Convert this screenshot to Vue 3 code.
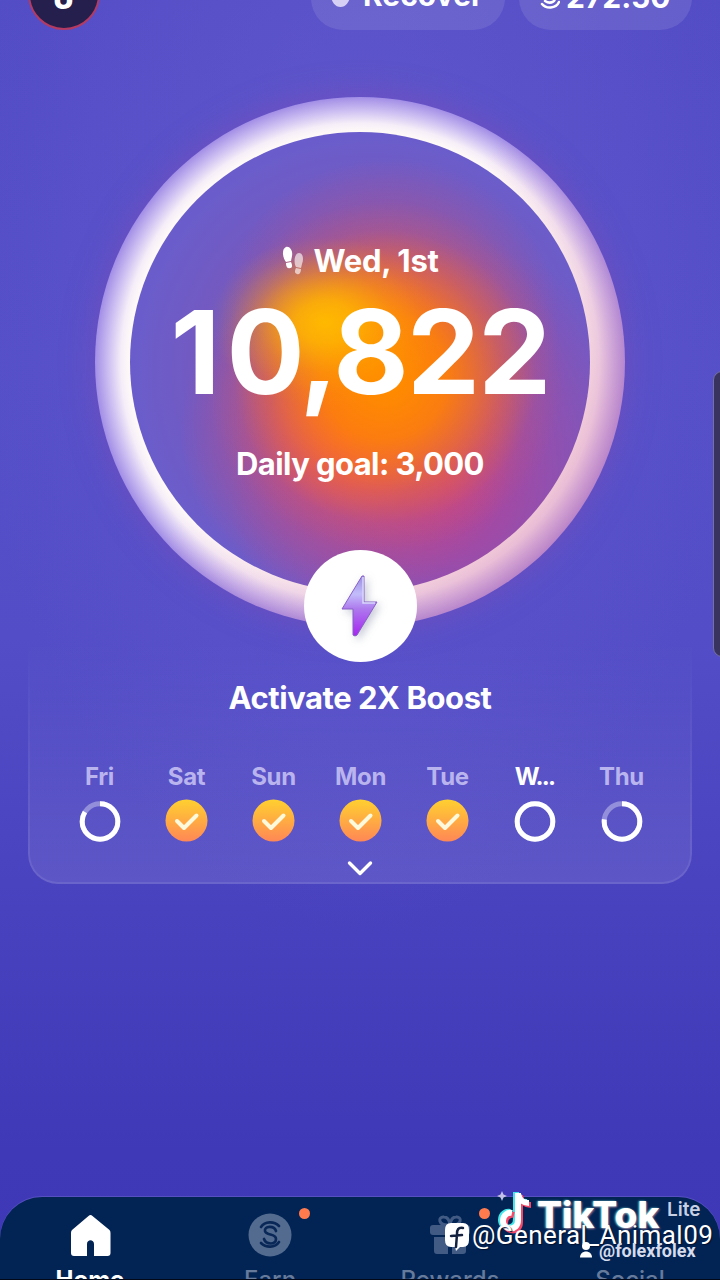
<script setup>
const days = [
    { name: "Fri", progress: 84 },
    { name: "Sat", done: true },
    { name: "Sun", done: true },
    { name: "Mon", done: true },
    { name: "Tue", done: true },
    { name: "W...", progress: 100, today: true },
    { name: "Thu", progress: 77 },
];

const tabs = [
    { name: "Home", icon: "home", active: true },
    { name: "Earn", icon: "coin", dot: true },
    { name: "Rewards", icon: "gift", dot: true },
    { name: "Social", icon: "people" },
];
</script>

<template>
    <main class="screen">
        <header class="top-bar">
            <div class="avatar">J</div>
            <div class="pill recover"><i class="status"></i>Recover</div>
            <div class="pill balance">
                <svg width="20" height="32" viewBox="0 0 20 32">
                    <path
                        d="M16 9C9 3 1 11 7 14l6 2c5 3-2 8-8 4M2 23c4 5 14 5 17-2"
                        fill="none"
                        stroke="#fff"
                        stroke-width="2.5"
                        stroke-linecap="round"
                    />
                </svg>
                <span>272.50</span>
            </div>
        </header>

        <section class="ring">
            <div class="disc">
                <div class="date">
                    <svg width="24" height="30" viewBox="0 0 24 30">
                        <g fill="#fff">
                            <path d="M5 1c4-1 7 4 6 9l-1 5-5 1C2 13 0 3 5 1z" />
                            <path d="M5 17l5-1c2 4 1 6-1 6-3 1-4-2-4-5z" />
                        </g>
                        <g fill="#fff" opacity=".62">
                            <path d="M18 7c4 0 5 6 3 11l-1 4-5-1c-3-6-1-14 3-14z" />
                            <path d="M15 22l5 1c0 4-2 6-4 5-3-1-2-4-1-6z" />
                        </g>
                    </svg>
                    <span>Wed, 1st</span>
                </div>
                <div class="steps"><span>1</span>0,822</div>
                <div class="goal">Daily goal: 3,000</div>
            </div>
            <button class="boost">
                <svg width="48" height="72" viewBox="0 0 48 72">
                    <defs>
                        <linearGradient id="bolt" x1="0" y1="0" x2="0" y2="1">
                            <stop offset="0" stop-color="#9a8ce0" />
                            <stop offset=".3" stop-color="#c3bdfb" />
                            <stop offset=".55" stop-color="#ad79ed" />
                            <stop offset="1" stop-color="#a624f0" />
                        </linearGradient>
                    </defs>
                    <path
                        d="M25 6L5 39h11v26q2 2 4 0L40 32H27V6z"
                        fill="url(#bolt)"
                        stroke="#8660c7"
                        stroke-width="1"
                        stroke-linejoin="round"
                    />
                    <path d="M26 7v26h12" fill="none" stroke="#d9d6fa" stroke-width="1.5" />
                </svg>
            </button>
        </section>

        <section class="card">
            <h2>Activate 2X Boost</h2>
            <div class="week">
                <div
                    class="day"
                    v-for="day in days"
                    :key="day.name"
                    :class="{ today: day.today }"
                >
                    <span>{{ day.name }}</span>
                    <svg width="44" height="44" viewBox="0 0 44 44">
                        <defs>
                            <linearGradient id="sun" x1="0" y1="0" x2="0" y2="1">
                                <stop offset="0" stop-color="#ffd02f" />
                                <stop offset="1" stop-color="#ff8756" />
                            </linearGradient>
                        </defs>
                        <template v-if="day.done">
                            <circle cx="21.5" cy="21.5" r="21" fill="url(#sun)" />
                            <path
                                d="M12 22l7 7L31.500 16.5"
                                fill="none"
                                stroke="#fff9dc"
                                stroke-width="4"
                                stroke-linecap="round"
                                stroke-linejoin="round"
                            />
                        </template>
                        <g v-else fill="none" stroke="#fff" stroke-width="5">
                            <circle cx="22" cy="22.5" r="17.8" opacity=".35" />
                            <circle
                                cx="22"
                                cy="22.5"
                                r="17.8"
                                pathLength="100"
                                :stroke-dasharray="`${day.progress} 100`"
                                transform="rotate(-90 22 22.5)"
                            />
                        </g>
                    </svg>
                </div>
            </div>
            <svg class="chevron" width="28" height="18" viewBox="0 0 28 18">
                <path
                    d="M3.500 4L14 14.500 24.500 4"
                    fill="none"
                    stroke="#fff"
                    stroke-width="3.4"
                    stroke-linecap="round"
                    stroke-linejoin="round"
                />
            </svg>
        </section>

        <nav class="tabs">
            <div
                class="tab"
                v-for="tab in tabs"
                :key="tab.name"
                :class="{ active: tab.active }"
            >
                <div class="tab-icon">
                    <svg v-if="tab.icon == 'home'" width="44" height="44" viewBox="0 0 44 44">
                        <path
                            d="M20.500 3q2-2 4 0l17 14q1 1 1 3v20q0 3-3 3H26V31c0-5-7-5-7 0v12H6q-3 0-3-3V20q0-2 1-3z"
                            fill="#fff"
                        />
                    </svg>
                    <svg v-if="tab.icon == 'coin'" width="44" height="44" viewBox="0 0 44 44">
                        <circle cx="22" cy="22" r="21.500" fill="#536b8f" />
                        <path
                            d="M28 18c-2-6-12-5-11 0s11 2 11 8-10 6-12 0M13 14c4-6 13-6 18-1M13 30c5 5 14 5 18-1"
                            fill="none"
                            stroke="#0a2857"
                            stroke-width="2.700"
                            stroke-linecap="round"
                        />
                    </svg>
                    <svg v-if="tab.icon == 'gift'" width="44" height="44" viewBox="0 0 44 44">
                        <g fill="#415b84">
                            <rect x="2" y="12" width="40" height="10" rx="3" />
                            <path d="M6 24h14v17H9q-3 0-3-3zM24 24h14v14q0 3-3 3H24z" />
                        </g>
                        <path
                            d="M22 12c-13 1-12-9-6-8q5 0 6 8 1-8 6-8c6-1 7 9-6 8z"
                            fill="none"
                            stroke="#415b84"
                            stroke-width="3"
                        />
                    </svg>
                    <i v-if="tab.dot" class="dot"></i>
                </div>
                <span>{{ tab.name }}</span>
            </div>
        </nav>

        <aside class="edge-panel"></aside>

        <div class="mark tiktok">
            <svg width="40" height="46" viewBox="0 0 40 46">
                <g fill="none" stroke-width="6">
                    <path d="M20 2v27c0 12-15 10-15 1 0-6 5-9 9-8M20 3c2 7 5 9 11 9" stroke="#42e5e8" />
                    <path d="M24 5v27c0 12-15 10-15 1 0-6 5-9 9-8M24 6c2 7 5 9 11 9" stroke="#f34868" />
                    <path d="M22 3v27c0 12-15 10-15 1 0-6 5-9 9-8M22 4c2 7 5 9 11 9" stroke="#fff" />
                </g>
                <path d="M6 1l1.500 3.500L11 6 7.500 7.500 6 11 4.500 7.500 1 6l3.500-1.500z" fill="#c5c2e8" />
            </svg>
            <strong>TikTok</strong>
            <em>Lite</em>
        </div>
        <div class="mark handle">
            <svg width="26" height="30" viewBox="0 0 26 30">
                <path
                    d="M7 1h12q6 0 6 7v10q0 7-6 7h-3l-4 4-1-4H7q-6 0-6-7V8q0-7 6-7z"
                    fill="#fff"
                />
                <path
                    d="M19 6c-5-1-6 2-6 6l-1 13M7 14l11-1"
                    fill="none"
                    stroke="#14213f"
                    stroke-width="2.500"
                    stroke-linecap="round"
                />
            </svg>
            <span>@General_Animal09</span>
        </div>
        <div class="mark user">
            <svg width="14" height="16" viewBox="0 0 14 16">
                <circle cx="7" cy="4" r="4" fill="#fff" />
                <path d="M1 15.500c0-8 12-8 12 0z" fill="#fff" />
            </svg>
            <span>@folexfolex</span>
        </div>
    </main>
</template>

<style>
body {
    background: #3d36b4;
    overflow: hidden;
}
</style>

<style scoped>
.screen {
    position: relative;
    box-sizing: border-box;
    width: 720px;
    height: 1280px;
    display: flex;
    flex-direction: column;
    overflow: hidden;
    border-bottom: 1px solid #020817;
    color: #fff;
    font-family: Inter, sans-serif;
    background:
        radial-gradient(ellipse 400px 700px at 50% 18%, rgba(114, 100, 212, 0.4), transparent),
        linear-gradient(#524cc5, #554fc8 28%, #534dc7 50%, #4a43c0 69%, #4039b7 90%, #3e37b6);
}

svg {
    display: block;
    flex: none;
}

.top-bar {
    display: flex;
    flex: none;
    height: 72px;
    margin: -42px 28px 0;
    font-size: 30px;
    font-weight: 700;
}

.avatar {
    box-sizing: border-box;
    width: 72px;
    margin-right: auto;
    border: 2px solid #b43a61;
    border-radius: 50%;
    background: #251f4d;
    font-size: 36px;
    line-height: 72px;
    text-align: center;
}

.pill {
    box-sizing: border-box;
    display: flex;
    align-items: center;
    border-radius: 32px;
    background: rgba(255, 255, 255, 0.1);
}

.recover {
    width: 194px;
    padding: 2px 0 0 20px;
    margin-right: 14px;
    gap: 13px;
}

.status {
    width: 19px;
    height: 24px;
    border-radius: 50%;
    background: #d6d0f5;
}

.balance {
    width: 173px;
    padding: 5px 0 0 21px;
    gap: 6px;
}

.ring {
    position: relative;
    box-sizing: border-box;
    flex: none;
    width: 530px;
    height: 530px;
    margin: 67px auto 0;
    padding: 35px;
    border-radius: 50%;
    background:
        linear-gradient(130deg, transparent 45%, rgba(215, 120, 165, 0.45) 85%),
        radial-gradient(circle, #fffaf8 230px, #f6eef8 239px, #cfc1f2 251px, #a28ee6 265px);
    box-shadow: 0 0 34px rgba(150, 75, 175, 0.4);
}

.disc {
    box-sizing: border-box;
    height: 460px;
    padding-top: 109px;
    border-radius: 50%;
    text-align: center;
    font-size: 31px;
    font-weight: 700;
    letter-spacing: -0.3px;
    line-height: 40px;
    background:
        radial-gradient(ellipse 115px 85px at 195px 190px, #ffb900, rgba(255, 182, 0, 0.85) 25%, rgba(255, 170, 0, 0.35) 60%, rgba(255, 165, 0, 0.1) 82%, transparent),
        radial-gradient(ellipse 180px 175px at 255px 245px, #ff8a00 10%, rgba(255, 130, 5, 0.9) 35%, rgba(255, 115, 20, 0.4) 65%, rgba(250, 100, 50, 0.1) 84%, transparent),
        radial-gradient(ellipse 170px 165px at 260px 190px, rgba(240, 85, 85, 0.7), rgba(225, 80, 100, 0.35) 50%, transparent),
        radial-gradient(ellipse 170px 165px at 220px 300px, rgba(250, 80, 90, 0.9), rgba(220, 75, 110, 0.45) 50%, transparent),
        radial-gradient(ellipse 220px 240px at 320px 350px, rgba(188, 64, 148, 0.9), rgba(175, 70, 155, 0.5) 50%, transparent),
        radial-gradient(circle 235px at 52% 52%, rgba(165, 75, 145, 0.7) 10%, rgba(140, 80, 165, 0.4) 60%, transparent),
        #6a5dcb;
}

.date {
    display: flex;
    justify-content: center;
    align-items: center;
    gap: 8px;
}

.steps {
    margin-top: 11px;
    font-size: 116px;
    letter-spacing: -1.8px;
    line-height: 120px;
}

.steps span {
    letter-spacing: 6px;
}

.goal {
    margin-top: 32px;
    letter-spacing: -0.6px;
}

/* sits on the lower edge of the ring */
.boost {
    position: absolute;
    left: 209px;
    bottom: -35px;
    display: flex;
    justify-content: center;
    align-items: center;
    width: 113px;
    height: 112px;
    padding: 0;
    border: 0;
    border-radius: 50%;
    background: #fff;
}

.boost svg {
    filter: drop-shadow(3px 3px 4px rgba(70, 80, 120, 0.3));
}

.card {
    position: relative;
    box-sizing: border-box;
    flex: none;
    width: 664px;
    height: 244px;
    margin: 13px auto 0;
    padding-top: 38px;
    border-radius: 0 0 30px 30px;
    background: linear-gradient(transparent, rgba(255, 255, 255, 0.1));
}

.card::before {
    content: "";
    position: absolute;
    inset: 0;
    border: 2px solid rgba(255, 255, 255, 0.09);
    border-top: 0;
    border-radius: inherit;
    mask-image: linear-gradient(transparent, #000);
}

h2 {
    margin: 0;
    font-size: 31px;
    font-weight: 700;
    letter-spacing: -0.45px;
    line-height: 40px;
    text-align: center;
}

.week {
    display: grid;
    grid-template-columns: repeat(7, 87px);
    justify-content: center;
    margin: 44px 0 0 1px;
}

.day {
    display: flex;
    flex-direction: column;
    align-items: center;
    gap: 7px;
    color: #b9b4ee;
    font-size: 24px;
    font-weight: 700;
    letter-spacing: -0.3px;
    line-height: 30px;
}

.today {
    color: #fff;
}

.today span {
    letter-spacing: -1.8px;
}

.chevron {
    margin: 16px auto 0;
}

.tabs {
    display: grid;
    grid-template-columns: repeat(4, 180px);
    flex: none;
    height: 120px;
    margin-top: auto;
    margin-bottom: -38px;
    border-radius: 42px 42px 0 0;
    background: #022454;
    box-shadow: 0 -1px 0 #554fc2;
}

.tab {
    display: flex;
    flex-direction: column;
    align-items: center;
    padding-top: 16px;
    gap: 8px;
    color: #667a9b;
    font-size: 24px;
    font-weight: 500;
    line-height: 30px;
}

.tab.active {
    color: #fff;
    font-weight: 700;
}

.tab-icon {
    position: relative;
    width: 44px;
    height: 44px;
}

.dot {
    position: absolute;
    top: -5px;
    right: -18px;
    width: 11px;
    height: 11px;
    border-radius: 50%;
    background: #ff7b4e;
}

.edge-panel {
    position: absolute;
    top: 371px;
    left: 713px;
    width: 20px;
    height: 284px;
    border: 1px solid #75709f;
    border-radius: 9px;
    background: #38345f;
}

/* watermarks laid over the tab bar */
.mark {
    position: absolute;
    display: flex;
    white-space: nowrap;
}

.tiktok {
    left: 496px;
    top: 1190px;
    line-height: 50px;
    text-shadow: -1px 0 2px #62d3dc, 1px 1px 2px #a76683;
}

.tiktok strong {
    width: 124px;
    margin-left: 1px;
    font-size: 37px;
    font-weight: 800;
}

.tiktok em {
    margin-left: 6px;
    color: #c8d0e4;
    font-size: 19px;
    font-style: normal;
    font-weight: 600;
    line-height: 40px;
    text-shadow: none;
}

.handle {
    left: 444px;
    top: 1222px;
    gap: 2px;
    font-family: Roboto, sans-serif;
    font-size: 26px;
    font-weight: 400;
    letter-spacing: 0.45px;
    line-height: 26px;
    text-shadow: 1px 1px 1px #001030;
}

.user {
    left: 579px;
    top: 1242px;
    gap: 6px;
    color: #d5dced;
    font-family: Roboto, sans-serif;
    font-size: 18px;
    font-weight: 700;
    line-height: 17px;
}
</style>
